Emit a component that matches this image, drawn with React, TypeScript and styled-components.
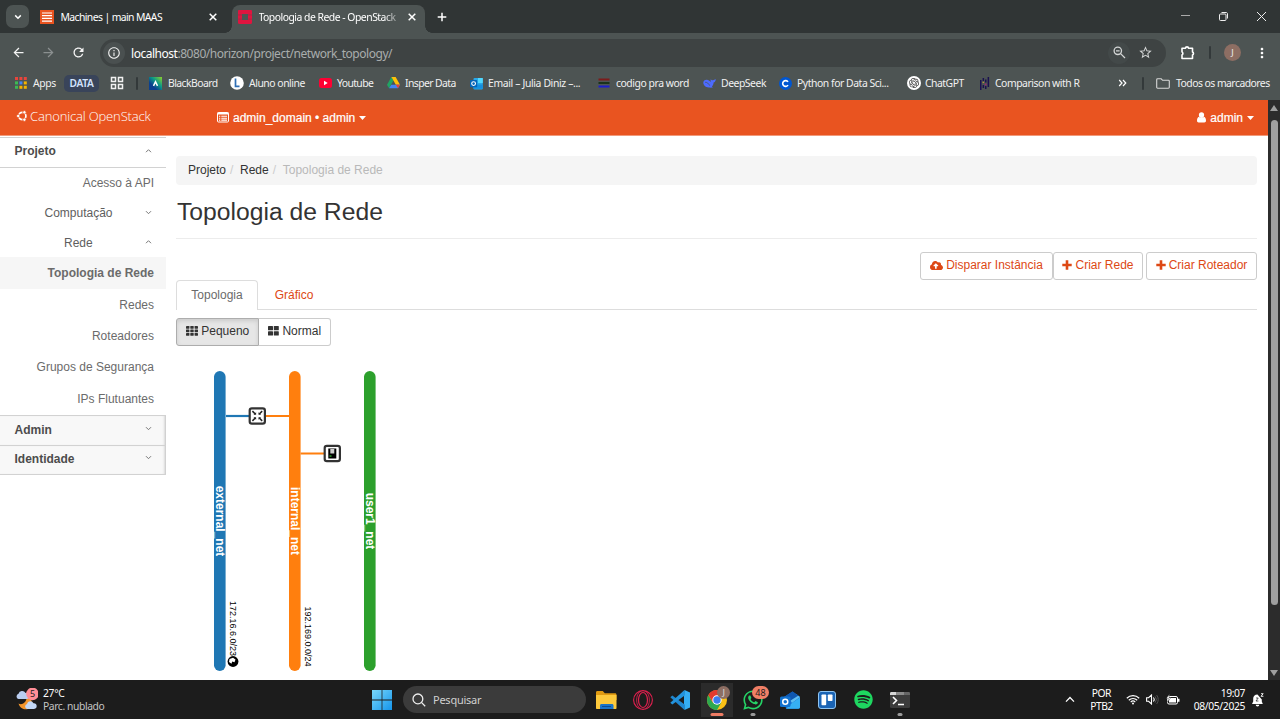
import React from "react";
import styled, { createGlobalStyle, css } from "styled-components";
import { FaCloudUploadAlt, FaWhatsapp, FaSpotify } from "react-icons/fa";
import { MdOutlineInfo, MdArrowBack, MdArrowForward, MdRefresh, MdStarBorder, MdMoreVert } from "react-icons/md";
import { SiOpenai } from "react-icons/si";

const uiFont = `"Noto Sans", "Open Sans", sans-serif`;
const pageFont = `"Liberation Sans", Arial, sans-serif`;

const GlobalStyle = createGlobalStyle`
  * { box-sizing: border-box; }
  body { margin: 0; overflow: hidden; }
  svg { display: block; flex: none; }
`;

const Screen = styled.div`
  width: 1280px;
  height: 719px;
  display: flex;
  flex-direction: column;
  overflow: hidden;
  background: #fff;
  font-family: ${uiFont};
`;

const Label = styled.span<{ $ls?: number }>`
  white-space: nowrap;
  letter-spacing: ${(p) => p.$ls ?? 0}px;
`;

/* ---------- browser window ---------- */

const TabStrip = styled.div`
  height: 33px;
  flex: none;
  display: flex;
  background: #303535;
  color: #fff;
  font-size: 10.4px;
`;

const TabSearch = styled.div`
  width: 23px;
  height: 23px;
  margin: 5px 0 0 6px;
  border-radius: 7px;
  background: #4d5453;
  display: grid;
  place-items: center;
`;

const Tab = styled.div<{ $active?: boolean; $width: number; $inset: number }>`
  position: relative;
  width: ${(p) => p.$width}px;
  height: 28px;
  margin-top: 5px;
  padding: 0 ${(p) => (p.$active ? 9 : 15)}px 5px ${(p) => p.$inset}px;
  display: flex;
  align-items: center;
  border-radius: 8px 8px 0 0;
  ${(p) =>
    p.$active &&
    css`
      background: #4d5453;
      &::before,
      &::after {
        content: "";
        position: absolute;
        bottom: 0;
        width: 7px;
        height: 7px;
      }
      &::before {
        left: -7px;
        background: radial-gradient(circle at 0 0, transparent 6.5px, #4d5453 7px);
      }
      &::after {
        right: -7px;
        background: radial-gradient(circle at 100% 0, transparent 6.5px, #4d5453 7px);
      }
    `}
`;

const TabTitle = styled(Label)<{ $fade?: boolean }>`
  flex: 1;
  min-width: 0;
  margin-left: 6.5px;
  ${(p) => p.$fade && css`mask-image: linear-gradient(90deg, #000 84%, transparent 97%);`}
`;

const NewTab = styled.div`
  width: 14px;
  margin: 10px 0 0 10px;
`;

const WindowControls = styled.div`
  margin-left: auto;
  padding: 11px 13px 0 0;
  display: flex;
  gap: 27px;
`;

const Toolbar = styled.div`
  height: 34px;
  flex: none;
  display: flex;
  align-items: center;
  padding: 5px 10px 0 11px;
  background: #4d5453;
  color: #fff;
`;

const NavButton = styled.div<{ $dim?: boolean }>`
  width: 30px;
  color: ${(p) => (p.$dim ? "#8b9090" : "#f4f4f4")};
`;

const Omnibox = styled.div`
  width: 1066px;
  height: 28px;
  margin-left: -1px;
  padding: 0 12px 0 3px;
  display: flex;
  align-items: center;
  border-radius: 14px;
  background: #3e4343;
  font-size: 12px;
  color: #a9adad;
`;

const RoundSpot = styled.div<{ $faint?: boolean }>`
  width: 22px;
  height: 22px;
  border-radius: 50%;
  display: grid;
  place-items: center;
  background: ${(p) => (p.$faint ? "#434949" : "#4a5050")};
  color: #eee;
`;

const Url = styled(Label)`
  margin-left: 6px;
  padding-top: 1px;
  flex: 1;
  b {
    font-weight: 400;
    color: #fff;
  }
`;

const OmniActions = styled.div`
  display: flex;
  align-items: center;
  gap: 8px;
  padding-right: 1px;
  color: #d4d6d6;
`;

const ToolbarRight = styled.div`
  flex: 1;
  display: flex;
  align-items: center;
  justify-content: flex-end;
`;

const Avatar = styled.div`
  width: 17px;
  height: 17px;
  margin: 0 13px 0 13px;
  border-radius: 50%;
  background: #8d6e63;
  color: #eee;
  font-size: 9px;
  display: grid;
  place-items: center;
`;

const Divider = styled.div`
  width: 2px;
  height: 13px;
  border-radius: 1px;
  background: #33393a;
`;

const ToolbarDivider = styled(Divider)`
  margin-left: 13px;
`;

const BookmarkBar = styled.div`
  height: 33px;
  flex: none;
  display: flex;
  align-items: center;
  padding: 0 0 1px 15px;
  background: #4d5453;
  color: #f1f1f1;
  font-size: 10.4px;
`;

const Bookmark = styled.div<{ $width: number; $gap?: number }>`
  flex: 0 0 ${(p) => p.$width}px;
  display: flex;
  align-items: center;
  gap: ${(p) => p.$gap ?? 5}px;
`;

const GroupPill = styled.div`
  width: 35px;
  height: 17px;
  border-radius: 5px;
  background: #39445a;
  color: #d3e3fd;
  font-weight: 600;
  font-size: 10.2px;
  display: grid;
  place-items: center;
`;

/* ---------- page ---------- */

const Viewport = styled.div`
  height: 580px;
  flex: none;
  display: flex;
  font-family: ${pageFont};
  font-size: 12px;
`;

const Page = styled.div`
  width: 1268px;
  display: flex;
  flex-direction: column;
`;

const Navbar = styled.header`
  height: 36px;
  flex: none;
  display: flex;
  align-items: center;
  padding: 0 14px 0 16px;
  background: #e95420;
  border-bottom: 1px solid #f19a7b;
  color: #fff;
  -webkit-text-stroke: 0.2px #fff;
`;

const Brand = styled.div`
  width: 201px;
  display: flex;
  align-items: center;
  gap: 2px;
  padding-bottom: 3px;
  font-family: "Open Sans", "Noto Sans", sans-serif;
  font-size: 13px;
  font-weight: 300;
  -webkit-text-stroke: 0;
`;

const NavMenu = styled.div<{ $right?: boolean }>`
  display: flex;
  align-items: center;
  gap: 4px;
  margin-left: ${(p) => (p.$right ? "auto" : "0")};
`;

const Body = styled.div`
  flex: 1;
  display: flex;
`;

const Sidebar = styled.nav`
  width: 166px;
  padding-top: 1px;
  color: #6b6b6b;
`;

const PanelHead = styled.div<{ $closed?: boolean }>`
  height: ${(p) => (p.$closed ? 30 : 31)}px;
  padding: 0 14px 3px 14.5px;
  display: flex;
  align-items: center;
  justify-content: space-between;
  font-weight: 700;
  color: #4c4c4c;
  border-top: 1px solid #d2d2d2;
  ${(p) =>
    p.$closed
      ? css`
          padding-bottom: 1px;
          background: #f8f8f8;
          box-shadow: inset -3px 0 3px -2px #bbb;
          &:last-child {
            padding-bottom: 2px;
            border-bottom: 1px solid #d2d2d2;
          }
        `
      : css`
          border-bottom: 1px solid #d2d2d2;
        `}
`;

const GroupHead = styled.div<{ $height: number; $indent: number }>`
  height: ${(p) => p.$height}px;
  padding: 0 14px 1px ${(p) => p.$indent}px;
  display: flex;
  align-items: center;
  justify-content: space-between;
  color: #5e5e5e;
`;

const SideLink = styled.div<{ $active?: boolean; $height?: number }>`
  height: ${(p) => p.$height ?? 31.4}px;
  padding-right: 12px;
  display: flex;
  align-items: center;
  justify-content: flex-end;
  font-weight: ${(p) => (p.$active ? 700 : 400)};
  background: ${(p) => (p.$active ? "#f6f6f6" : "transparent")};
`;

const Main = styled.main`
  width: 1081px;
  margin-left: 10px;
  padding-top: 20px;
`;

const Breadcrumb = styled.div`
  height: 29px;
  padding: 0 12px 2px;
  display: flex;
  align-items: center;
  border-radius: 4px;
  background: #f5f5f5;
  color: #333;
  i {
    width: 14px;
    padding-left: 4px;
    font-style: normal;
    color: #ccc;
  }
  em {
    font-style: normal;
    color: #b9b9b9;
  }
`;

const Title = styled.h1`
  height: 54px;
  margin: 0;
  padding-left: 1px;
  border-bottom: 1px solid #ececec;
  font-size: 24.7px;
  line-height: 53px;
  font-weight: 400;
  color: #333;
`;

const Actions = styled.div`
  height: 41px;
  padding-top: 13px;
  display: flex;
  justify-content: flex-end;
`;

const Button = styled.button<{ $width: number; $gapLeft?: number }>`
  width: ${(p) => p.$width}px;
  height: 28px;
  margin: 0 0 0 ${(p) => p.$gapLeft ?? 0}px;
  padding: 0 0 2px;
  display: flex;
  align-items: center;
  justify-content: center;
  gap: 3px;
  border: 1px solid #ccc;
  border-radius: 3px;
  background: #fff;
  font: 12px ${pageFont};
  color: #dd4814;
  white-space: nowrap;
`;

const Tabs = styled.div`
  height: 30px;
  display: flex;
  border-bottom: 1px solid #ddd;
`;

const PageTab = styled.div<{ $active?: boolean }>`
  width: ${(p) => (p.$active ? 82 : 72)}px;
  height: 30px;
  padding-bottom: 1px;
  display: grid;
  place-items: center;
  color: ${(p) => (p.$active ? "#6b6b6b" : "#dd4814")};
  ${(p) =>
    p.$active &&
    css`
      border: 1px solid #ddd;
      border-bottom: 0;
      border-radius: 4px 4px 0 0;
      background: #fff;
    `}
`;

const Toggle = styled.div`
  margin-top: 8px;
  display: flex;
`;

const ToggleButton = styled(Button)<{ $on?: boolean }>`
  padding-bottom: 3px;
  gap: 3.5px;
  color: #333;
  ${(p) =>
    p.$on
      ? css`
          background: #e6e6e6;
          border-color: #adadad;
          border-radius: 3px 0 0 3px;
          box-shadow: inset 0 2px 4px rgba(0, 0, 0, 0.12);
        `
      : css`
          border-left: 0;
          border-radius: 0 3px 3px 0;
        `}
`;

const Canvas = styled.div`
  margin-top: 24px;
`;

const Scrollbar = styled.div`
  width: 12px;
  padding: 5px 2px 4px;
  display: flex;
  flex-direction: column;
  align-items: center;
  justify-content: space-between;
  background: #2c2c2c;
`;

const Thumb = styled.div`
  width: 7px;
  height: 485px;
  margin-bottom: auto;
  margin-top: 9px;
  border-radius: 4px;
  background: #9f9f9f;
`;

/* ---------- taskbar ---------- */

const Taskbar = styled.footer`
  height: 39px;
  flex: none;
  display: flex;
  align-items: center;
  background: #1c1c1c;
  color: #fff;
  font-size: 10.3px;
`;

const Weather = styled.div`
  width: 372px;
  padding-left: 16px;
  display: flex;
  align-items: center;
  gap: 5px;
`;

const Lines = styled.div<{ $right?: boolean; $center?: boolean }>`
  display: flex;
  flex-direction: column;
  align-items: ${(p) => (p.$right ? "flex-end" : p.$center ? "center" : "flex-start")};
  line-height: 13px;
  small {
    font-size: inherit;
    color: #c4c4c4;
  }
`;

const SearchBox = styled.div`
  width: 183px;
  height: 27px;
  margin: 0 2px 0 11px;
  padding-left: 9px;
  display: flex;
  align-items: center;
  gap: 7px;
  border-radius: 14px;
  background: #3b3b3b;
  color: #d0d0d0;
  font-size: 11px;
`;

const TaskButton = styled.div<{ $state?: "active" | "open" }>`
  position: relative;
  width: 36.75px;
  height: 39px;
  display: grid;
  place-items: center;
  ${(p) =>
    p.$state === "active" &&
    css`
      background: linear-gradient(#2b2b2b, #2b2b2b) center / 32px 34px no-repeat;
    `}
  ${(p) =>
    p.$state &&
    css`
      &::after {
        content: "";
        position: absolute;
        bottom: 3px;
        left: 50%;
        transform: translateX(-50%);
        width: ${p.$state === "active" ? 13 : 5}px;
        height: 3px;
        border-radius: 2px;
        background: ${p.$state === "active" ? "#ee7c64" : "#9a9a9a"};
      }
    `}
`;

const Badge = styled.span<{ $kind: "user" | "count" }>`
  position: absolute;
  top: 6px;
  left: ${(p) => (p.$kind === "user" ? 19 : 17)}px;
  width: ${(p) => (p.$kind === "user" ? 13 : 17)}px;
  height: 13px;
  border-radius: 7px;
  background: ${(p) => (p.$kind === "user" ? "#8d6e63" : "#f07f66")};
  color: ${(p) => (p.$kind === "user" ? "#ddd" : "#1c1c1c")};
  font-size: 9px;
  line-height: 13px;
  text-align: center;
`;

const Tray = styled.div`
  margin-left: auto;
  padding-right: 16px;
  display: flex;
  align-items: center;
`;

const TrayIcons = styled.div`
  width: 54px;
  margin: 0 14px 0 13px;
  display: flex;
  align-items: center;
  justify-content: space-between;
`;

const TrayArrow = styled.svg`
  margin-right: 15px;
  fill: none;
  stroke: #fff;
  stroke-width: 1.3;
`;

const Bell = styled.div`
  margin-left: 7px;
`;

/* ---------- drawings ---------- */

const Close = () => (
  <svg width="8" height="8" viewBox="0 0 8 8" stroke="#fff" strokeWidth="1.5"><path d="M.7.7l6.6 6.6M7.3.7L.7 7.3" /></svg>
);

const Chevron = ({ up }: { up?: boolean }) => (
  <svg width="7" height="7" viewBox="0 0 7 7" fill="none" stroke="#777" strokeWidth="1">
    <path d={up ? "M1 4.200L3.500 1.700 6 4.200" : "M1 1.200L3.500 3.700 6 1.200"} />
  </svg>
);

const Caret = () => (
  <svg width="7" height="4" viewBox="0 0 7 4" fill="#fff"><path d="M0 0h7L3.500 4z" /></svg>
);

const Plus = () => (
  <svg width="10" height="10" viewBox="0 0 10 10" fill="#dd4814"><path d="M3.700.3h2.600v3.400h3.400v2.600H6.300v3.400H3.700V6.300H.3V3.700h3.400z" /></svg>
);

const ListIcon = () => (
  <svg width="12" height="11" viewBox="0 0 12 11">
    <rect x=".5" y=".5" width="11" height="9.500" rx="1" fill="none" stroke="#fff" />
    <path d="M.5.500h11v2H.5z" fill="#fff" />
    <path d="M2 4.300h1.300M2 6.200h1.300M2 8.100h1.300M4.300 4.300H10M4.300 6.200H10M4.300 8.100H10" stroke="#fff" strokeWidth="1.100" />
  </svg>
);

const SmallTiles = () => (
  <svg width="12" height="10" viewBox="0 0 12 10" fill="#333">
    {[0, 3.5, 7].map((y) => [0, 4.3, 8.6].map((x) => <rect key={`${x}-${y}`} x={x} y={y} width="3.400" height="2.700" rx=".4" />))}
  </svg>
);

const LargeTiles = () => (
  <svg width="11" height="10" viewBox="0 0 11 10" fill="#333">
    {[0, 5.2].map((y) => [0, 5.8].map((x) => <rect key={`${x}-${y}`} x={x} y={y} width="5" height="4.300" rx=".6" />))}
  </svg>
);

const MaasIcon = () => (
  <svg width="14" height="14" viewBox="0 0 14 14"><rect width="14" height="14" fill="#e95420" /><path d="M2 3h10M2 5.700h10M2 8.400h10M2 11.100h10" stroke="#fff" strokeWidth="1.200" /></svg>
);

const OpenStackIcon = () => (
  <svg width="14" height="14" viewBox="0 0 14 14" fill="#e0143f">
    <path fillRule="evenodd" d="M1.200 0h11.600c.7 0 1.200.5 1.200 1.200v11.600c0 .7-.5 1.200-1.200 1.200H1.200C.5 14 0 13.500 0 12.800V1.200C0 .5.500 0 1.200 0zM4 4v6h6V4z" />
    <path d="M0 4.900h4M0 9.100h4M10 4.900h4M10 9.100h4" stroke="#8a3548" strokeWidth=".7" />
  </svg>
);

const dots = ["#e8453c", "#e8453c", "#e8453c", "#3cba54", "#4285f4", "#f4b400", "#3cba54", "#f4b400", "#f4b400"];
const AppsIcon = () => (
  <svg width="12" height="12" viewBox="0 0 12 12">
    {dots.map((c, i) => <rect key={i} x={(i % 3) * 4.4} y={Math.floor(i / 3) * 4.4} width="3" height="3" fill={c} />)}
  </svg>
);

const GridIcon = () => (
  <svg width="14" height="14" viewBox="0 0 14 14" fill="none" stroke="#f1f1f1" strokeWidth="1.500">
    <path d="M1.500 1.500h4v4h-4zM8.500 1.500h4v4h-4zM1.500 8.500h4v4h-4zM8.500 8.500h4v4h-4z" />
  </svg>
);

const PuzzleIcon = () => (
  <svg width="16" height="16" viewBox="0 0 16 16" fill="none" stroke="#fff" strokeWidth="1.600" strokeLinejoin="round">
    <path d="M2 3.300h3.500a1.500 1.400 0 013 0h4v3.700a1.500 1.600 0 010 3v3.500H2V10a1.900 1.900 0 000-3.200z" />
  </svg>
);

const BlackboardIcon = () => (
  <svg width="13" height="13" viewBox="0 0 13 13">
    <defs><linearGradient id="bb" x1="0" y1="1" x2="1" y2="0"><stop offset=".3" stopColor="#0a3f8f" /><stop offset=".6" stopColor="#0b9a86" /><stop offset="1" stopColor="#8fd32a" /></linearGradient></defs>
    <rect width="13" height="13" fill="url(#bb)" /><path d="M4.500 8.800L6.500 4.700l2 4.100" fill="none" stroke="#fff" strokeWidth="1.500" />
  </svg>
);

const AlunoIcon = () => (
  <svg width="14" height="14" viewBox="0 0 14 14"><circle cx="7" cy="7" r="6.800" fill="#fff" /><path d="M5.500 2.600v7.800h4" fill="none" stroke="#2f6fb5" strokeWidth="1.700" /></svg>
);

const YoutubeIcon = () => (
  <svg width="13" height="10" viewBox="0 0 13 10"><rect width="13" height="10" rx="2.500" fill="#f03" /><path d="M5 2.800v4.400L8.700 5z" fill="#fff" /></svg>
);

const DriveIcon = () => (
  <svg width="13" height="12" viewBox="0 0 13 12"><path d="M4.400 0L0 7.700l2 3.600L6.500 3.600z" fill="#1fa463" /><path d="M4.400 0h4.200L13 7.700H8.800z" fill="#ffc107" /><path d="M4.300 7.700H13l-2 3.600H2z" fill="#4285f4" /><path d="M8.800 7.700H13l-2 3.600z" fill="#ea4335" /></svg>
);

const OutlookIcon = () => (
  <svg width="13" height="13" viewBox="0 0 13 13"><rect x="3.500" y="1" width="9.300" height="11.500" rx="1" fill="#28a8ea" /><path d="M8 1h4.800v5H8z" fill="#50d9ff" /><path d="M3.500 7.500h9.300v4.300H3.500z" fill="#1490df" /><rect y="3" width="7.200" height="7.200" rx=".8" fill="#0364b8" /><circle cx="3.600" cy="6.600" r="1.900" fill="none" stroke="#fff" strokeWidth="1.100" /></svg>
);

const CodeIcon = () => (
  <svg width="12" height="12" viewBox="0 0 12 12"><path d="M.5 1.500h11v2H.5z" fill="#7d1b1b" /><path d="M.5 5h11v2H.5z" fill="#1b331b" /><path d="M.5 8.500h11v2H.5z" fill="#1c1ccc" /></svg>
);

const WhaleIcon = () => (
  <svg width="13" height="11" viewBox="0 0 13 11" fill="#4d6bfe">
    <path d="M.3 4.200C1 1.800 3.200 1.400 4.800 2c.9.200 2 1 2.800 2 .3-.9-.3-1.800.2-2.700.5.8 1.200 1.100 2.100.9C10.900 2 12 1.500 12.700.9 12.800 3 11.700 4.200 10.600 4.600c0 1.800-.8 3.100-1.700 4 .4.300.8.500 1.200.7-1.600.6-3.200.3-4.300.2C2.300 9.300.1 6.700.3 4.200z" />
    <path d="M2.200 4.300c1.800-.2 3.500 1.300 4.500 3.300" stroke="#4d5453" strokeWidth=".8" fill="none" />
  </svg>
);

const CourseraIcon = () => (
  <svg width="13" height="13" viewBox="0 0 13 13"><circle cx="6.500" cy="6.500" r="6.500" fill="#0056d2" /><path d="M9 4.900a2.900 2.900 0 100 3.200" fill="none" stroke="#fff" strokeWidth="1.600" /></svg>
);

const ChatBadge = styled.div`
  width: 14px;
  height: 14px;
  border-radius: 50%;
  background: #fff;
  color: #333;
  font-size: 10px;
  display: grid;
  place-items: center;
`;

const PandasIcon = () => (
  <svg width="11" height="13" viewBox="0 0 11 13" fill="#1a1150"><path d="M1 3h1.500v10H1zM3.600 1h1.500v3H3.600zM3.600 8h1.500v3H3.600zM6 2.500h1.500v3H6zM6 9h1.500v3H6zM8.600 0h1.500v10H8.600z" /><path d="M3.600 4.800h1.500v1.200H3.600z" fill="#b9903a" /><path d="M5.800 6.600h1.700v1.600H5.800z" fill="#9a2179" /></svg>
);

const FolderIcon = () => (
  <svg width="14" height="11" viewBox="0 0 14 11" fill="none" stroke="#d7d7d7" strokeWidth="1.100"><path d="M1.600.8h3.600l1.400 1.500h5.800c.5 0 .9.300.9.800v6.200c0 .500-.4.900-.9.900H1.600c-.5 0-.9-.4-.9-.9V1.700c0-.5.400-.9.900-.9z" /></svg>
);

const CircleOfFriends = () => (
  <svg width="12" height="12" viewBox="0 0 12 12">
    <circle cx="6.300" cy="6" r="3.600" fill="none" stroke="#fff" strokeWidth="1.700" />
    <g fill="#fff" stroke="#e95420" strokeWidth=".8">
      <circle cx="2.200" cy="6" r="1.700" />
      <circle cx="8.400" cy="2.300" r="1.700" />
      <circle cx="8.400" cy="9.700" r="1.700" />
    </g>
  </svg>
);

const UserIcon = () => (
  <svg width="9" height="11" viewBox="0 0 10 12" fill="#fff"><ellipse cx="5" cy="3.300" rx="2.900" ry="3.200" /><path d="M2.300 5.300C.6 5.800 0 7.500 0 9.700 0 10.900.8 11.600 1.800 11.600h6.400c1 0 1.800-.7 1.800-1.900 0-2.200-.6-3.900-2.300-4.400C7 6.600 3 6.600 2.300 5.300z" /></svg>
);

const WeatherIcon = () => (
  <svg width="22" height="24" viewBox="0 0 22 24">
    <path d="M2.500 15.500c2.500 1.500 7 1 8.500-6.500 4 1 6.500 5 4 9.500-2.500 4-10 4.500-12.500-3z" fill="#f2952c" />
    <path d="M2.500 11a2.700 2.700 0 010-5.200A3.800 3.800 0 019.500 5 3 3 0 0111 11z" fill="#b9cdf0" />
    <path d="M11 21a2.600 2.600 0 010-5 3.500 3.500 0 016.500-.8A2.900 2.900 0 0118 21z" fill="#c3d8f7" />
    <circle cx="16.500" cy="5.900" r="6.300" fill="#ff8e97" />
    <text x="16.500" y="9.200" textAnchor="middle" fontSize="9" fill="#222">5</text>
  </svg>
);

const WindowsIcon = () => (
  <svg width="20" height="20" viewBox="0 0 20 20">
    <defs><linearGradient id="win" x1="0" y1="0" x2="1" y2="1"><stop stopColor="#7ad8fb" /><stop offset="1" stopColor="#1494ea" /></linearGradient></defs>
    <path d="M0 0h9.600v9.600H0zM10.400 0H20v9.600h-9.600zM0 10.400h9.600V20H0zM10.400 10.400H20V20h-9.600z" fill="url(#win)" />
  </svg>
);

const SearchIcon = () => (
  <svg width="14" height="14" viewBox="0 0 14 14" fill="none" stroke="#eee" strokeWidth="1.300"><circle cx="5.900" cy="5.900" r="4.900" /><path d="M9.400 9.400l3.800 3.800" /></svg>
);

const ExplorerIcon = () => (
  <svg width="21" height="18" viewBox="0 0 21 18"><path d="M0 1.500C0 .7.500 0 1.400 0h5.400l2 2.300H19c1 0 1.500.6 1.500 1.500V9H0z" fill="#e09a12" /><path d="M0 4h20.500v13c0 .6-.3 1-1 1H1c-.7 0-1-.4-1-1z" fill="#fdc93c" /><path d="M4 18v-3.500c0-.9.600-1.500 1.500-1.500H16c.9 0 1.500.6 1.500 1.500V18z" fill="#1b74c9" /><path d="M6 15.500h9" stroke="#0d4c93" /></svg>
);

const OperaIcon = () => (
  <svg width="20" height="20" viewBox="0 0 20 20" fill="none" stroke="#e0204f"><circle cx="10" cy="10" r="9.400" strokeWidth="1.100" /><ellipse cx="10" cy="10" rx="4.500" ry="7.500" strokeWidth="1.200" /><path d="M7.800 1c-5.600 3-5.600 15 0 18M12.200 1c5.600 3 5.600 15 0 18" strokeWidth=".8" /></svg>
);

const CodeEditorIcon = () => (
  <svg width="20" height="20" viewBox="0 0 20 20">
    <path d="M14.500 0L20 2.400v15.200L14.500 20 14 15V5z" fill="#35adf2" />
    <path d="M14.500 20L.3 7.200l2-1.800L15 14.800z" fill="#1e86cf" />
    <path d="M14.500 0L.3 12.800l2 1.800L15 5.200z" fill="#2393dc" />
  </svg>
);

const ChromeIcon = () => (
  <svg width="20" height="20" viewBox="0 0 20 20">
    <circle cx="10" cy="10" r="10" fill="#fbc116" />
    <path d="M1.340 5A10 10 0 0010 20l4.300-7.500L10 10 5.700 12.500z" fill="#2da94f" />
    <path d="M10 5.500h8.930A10 10 0 0010 0 10 10 0 001.340 5l4.500 7.500z" fill="#e33b2e" />
    <circle cx="10" cy="10" r="4.700" fill="#fff" /><circle cx="10" cy="10" r="3.700" fill="#3b7df0" />
  </svg>
);

const OutlookNewIcon = () => (
  <svg width="20" height="18" viewBox="0 0 20 18"><path d="M4 6l8.500-5.500L20 6v10c0 1-.6 1.700-1.700 1.700H6z" fill="#1a6fd0" /><path d="M9 7.500L16 3l4 3-8 6z" fill="#5fbdf0" /><path d="M20 6.500V16c0 1-.6 1.700-1.700 1.700H6l6-5.700z" fill="#36b0f3" /><path d="M4 6l8.500-5.500 6 4L9 10.500z" fill="#0f57b0" /><rect y="5.500" width="10.500" height="10.500" rx="1.600" fill="#1272cf" /><circle cx="5.250" cy="10.750" r="2.500" fill="none" stroke="#fff" strokeWidth="1.500" /></svg>
);

const TrelloIcon = () => (
  <svg width="18" height="18" viewBox="0 0 18 18"><rect x=".5" y=".5" width="17" height="17" rx="2.500" fill="#1a64b5" stroke="#8fc5f2" /><rect x="3.500" y="3.500" width="4.700" height="10.800" rx=".8" fill="#fff" /><rect x="9.800" y="3.500" width="4.700" height="6.500" rx=".8" fill="#fff" /></svg>
);

const TerminalIcon = () => (
  <svg width="20" height="16" viewBox="0 0 20 16"><rect width="20" height="16" rx="1.500" fill="#3c3c3c" /><path d="M1.500 0h5v3H0V1.500C0 .5.600 0 1.500 0z" fill="#d6d6d6" /><path d="M7 0h7v3H7z" fill="#8c8c8c" /><path d="M14 0h4.500c1 0 1.500.5 1.500 1.500V3h-6z" fill="#666" /><path d="M3 5l3.500 3.500L3 12M8 12.500h6" fill="none" stroke="#fff" strokeWidth="1.600" /></svg>
);

const WifiIcon = () => (
  <svg width="14" height="11" viewBox="0 0 14 11" fill="none" stroke="#fff" strokeWidth="1.200"><path d="M.8 4.200a8.800 8.800 0 0112.400 0M2.800 6.200a6 6 0 018.400 0M4.700 8.100a3.300 3.300 0 014.600 0" /><circle cx="7" cy="9.600" r="1" fill="#fff" stroke="none" /></svg>
);

const VolumeIcon = () => (
  <svg width="13" height="11" viewBox="0 0 13 11" fill="none" stroke="#fff" strokeWidth="1.100"><path d="M.6 3.700h2L5.500 1v9L2.600 7.300h-2zM7.300 3.500a3 3 0 010 4" /><path d="M9 2.300a4.800 4.800 0 010 6.400M10.600 1a7 7 0 010 9" stroke="#555" strokeWidth=".9" /></svg>
);

const BatteryIcon = () => (
  <svg width="14" height="12" viewBox="0 0 14 12"><rect x="1.500" y="2.500" width="10" height="7.500" rx="1.500" fill="none" stroke="#fff" /><path d="M3 4h7v4.500H3zM12 4.800h1.500v3H12z" fill="#fff" /><path d="M3.500 0L.3 4.500h2L1.500 8 5 3.500H3z" fill="#fff" stroke="#1c1c1c" strokeWidth=".4" /></svg>
);

const BellIcon = () => (
  <svg width="12" height="14" viewBox="0 0 12 14" fill="#fff"><path d="M5.500 1.500C2.700 1.500 1.200 3.300 1.200 5.500v3L0 11h10.800L9.800 8.500V6.500z" /><path d="M3.700 11.700h3.600a1.800 1.800 0 01-3.600 0z" /><path d="M9 .7h2.200L9 3.300h2.400" stroke="#fff" strokeWidth=".9" fill="none" /><path d="M4 5h2.200L4 8h2.400" stroke="#1c1c1c" fill="none" strokeWidth=".7" /></svg>
);

const networks = [
  { name: "external_net", color: "#1f77b4", x: 38, cidr: "172.16.6.0/23", end: 286 },
  { name: "internal_net", color: "#ff7f0e", x: 113, cidr: "192.169.0.0/24", end: 296.5 },
  { name: "user1_net", color: "#2ca02c", x: 188 },
];

const Topology = () => (
  <svg width="400" height="310" viewBox="0 0 400 310" fontFamily="Liberation Sans, Arial, sans-serif">
    {networks.map((n) => (
      <g key={n.name}>
        <rect x={n.x} y="1" width="11.600" height="300" rx="5.800" fill={n.color} />
        <text transform={`translate(${n.x + 1.7} 151) rotate(90)`} textAnchor="middle" fontSize="12" fontWeight="700" fill="#fff">{n.name}</text>
        {n.cidr && <text transform={`translate(${n.x + 15.5} ${n.end}) rotate(90)`} textAnchor="end" fontSize="9" fill="#000">{n.cidr}</text>}
      </g>
    ))}
    <g transform="translate(57 291.500)">
      <circle r="5.400" fill="#000" /><path d="M-3.500-2.500L0-3.800 2.500-2 1.500.8-.8 0-1.500 2.300-4 .5z" fill="#fff" />
    </g>
    <path d="M50 46h24" stroke="#1f77b4" strokeWidth="2.200" />
    <path d="M88 46h25M124.600 83.500h25" stroke="#ff7f0e" strokeWidth="2.200" />
    <g transform="translate(81.300 46)">
      <rect x="-7.600" y="-7.600" width="15.200" height="15.200" rx="2.200" fill="#fff" stroke="#333" strokeWidth="2.200" />
      {[0, 90, 180, 270].map((a) => (
        <g key={a} transform={`rotate(${a})`} stroke="#222" strokeWidth="1.500" fill="#222"><path d="M-4.900-4.900L-2-2" /><path d="M-1.200-3.800v2.600h-2.600z" stroke="none" /></g>
      ))}
    </g>
    <g transform="translate(156.300 83.500)">
      <rect x="-7.600" y="-7.600" width="15.200" height="15.200" rx="2.200" fill="#fff" stroke="#333" strokeWidth="2.200" />
      <rect x="-4" y="-5" width="8" height="10" fill="#000" /><path d="M-2-4.500h4V0h-4z" fill="#ccc" /><rect x="-2.800" y="1.800" width="2" height="1.500" fill="#2ca02c" />
    </g>
  </svg>
);

/* ---------- composition ---------- */

const bookmarks: { icon: React.ReactNode; text: string; width: number; gap?: number; ls: number }[] = [
  { icon: <BlackboardIcon />, text: "BlackBoard", width: 81, gap: 6, ls: -0.55 },
  { icon: <AlunoIcon />, text: "Aluno online", width: 89, ls: -0.47 },
  { icon: <YoutubeIcon />, text: "Youtube", width: 68, ls: -0.62 },
  { icon: <DriveIcon />, text: "Insper Data", width: 83, ls: -0.58 },
  { icon: <OutlookIcon />, text: "Email – Julia Diniz –...", width: 128, ls: -0.36 },
  { icon: <CodeIcon />, text: "codigo pra word", width: 105, gap: 6, ls: -0.45 },
  { icon: <WhaleIcon />, text: "DeepSeek", width: 76, ls: -0.46 },
  { icon: <CourseraIcon />, text: "Python for Data Sci...", width: 128, ls: -0.45 },
  { icon: <ChatBadge><SiOpenai /></ChatBadge>, text: "ChatGPT", width: 72, gap: 4, ls: -0.5 },
  { icon: <PandasIcon />, text: "Comparison with R", width: 139, ls: -0.46 },
];

const Browser = () => (
  <>
    <TabStrip>
      <TabSearch><svg width="8" height="6" viewBox="0 0 8 6" fill="none" stroke="#fff" strokeWidth="1.500"><path d="M1.200 1.400L4 4.200l2.800-2.800" /></svg></TabSearch>
      <Tab $width={203} $inset={11}><MaasIcon /><TabTitle $ls={-0.6}>Machines | main MAAS</TabTitle><Close /></Tab>
      <Tab $width={193} $inset={6} $active><OpenStackIcon /><TabTitle $ls={-0.5} $fade>Topologia de Rede - OpenStack</TabTitle><Close /></Tab>
      <NewTab><svg width="14" height="14" viewBox="0 0 14 14" stroke="#fff" strokeWidth="1.500"><path d="M7 2.700v8.600M2.700 7h8.600" /></svg></NewTab>
      <WindowControls>
        <svg width="11" height="11" viewBox="0 0 11 11" stroke="#aaa"><path d="M1 4.500h9" /></svg>
        <svg width="11" height="11" viewBox="0 0 11 11" fill="none" stroke="#eee"><rect x="1.500" y="3" width="6.500" height="6.500" rx="1" /><path d="M3.500 1.500H8c1 0 1.500.5 1.500 1.500v4.500" /></svg>
        <svg width="11" height="11" viewBox="0 0 11 11" stroke="#eee"><path d="M1 1l9 9M10 1l-9 9" /></svg>
      </WindowControls>
    </TabStrip>
    <Toolbar>
      <NavButton><MdArrowBack size={15} /></NavButton>
      <NavButton $dim><MdArrowForward size={15} /></NavButton>
      <NavButton><MdRefresh size={15} /></NavButton>
      <Omnibox>
        <RoundSpot><MdOutlineInfo size={14} /></RoundSpot>
        <Url $ls={-0.47}><b>localhost</b>:8080/horizon/project/network_topology/</Url>
        <OmniActions>
          <RoundSpot $faint><svg width="13" height="13" viewBox="0 0 13 13" fill="none" stroke="#d4d6d6" strokeWidth="1.300"><circle cx="4.800" cy="4.800" r="3.700" /><path d="M7.600 7.600l4.400 4.400M3 4.800h3.600" /></svg></RoundSpot>
          <MdStarBorder size={15} />
        </OmniActions>
      </Omnibox>
      <ToolbarRight>
        <PuzzleIcon />
        <ToolbarDivider />
        <Avatar>J</Avatar>
        <MdMoreVert size={16} />
      </ToolbarRight>
    </Toolbar>
    <BookmarkBar>
      <Bookmark $width={49} $gap={6}><AppsIcon /><Label $ls={-0.35}>Apps</Label></Bookmark>
      <Bookmark $width={46}><GroupPill><Label $ls={-0.3}>DATA</Label></GroupPill></Bookmark>
      <Bookmark $width={26}><GridIcon /></Bookmark>
      <Bookmark $width={13}><Divider /></Bookmark>
      {bookmarks.map((b) => (
        <Bookmark key={b.text} $width={b.width} $gap={b.gap}>{b.icon}<Label $ls={b.ls}>{b.text}</Label></Bookmark>
      ))}
      <Bookmark $width={24}><svg width="9" height="8" viewBox="0 0 9 8" fill="none" stroke="#fff" strokeWidth="1.200"><path d="M1.200 1L4 4 1.200 7M5 1l2.800 3L5 7" /></svg></Bookmark>
      <Bookmark $width={14}><Divider /></Bookmark>
      <Bookmark $width={124} $gap={6}><FolderIcon /><Label $ls={-0.53}>Todos os marcadores</Label></Bookmark>
    </BookmarkBar>
  </>
);

const SideNav = () => (
  <Sidebar>
    <PanelHead>Projeto<Chevron up /></PanelHead>
    <SideLink $height={30}>Acesso à API</SideLink>
    <GroupHead $height={31} $indent={44.5}>Computação<Chevron /></GroupHead>
    <GroupHead $height={28} $indent={64}>Rede<Chevron up /></GroupHead>
    <SideLink $active $height={32}>Topologia de Rede</SideLink>
    <SideLink>Redes</SideLink>
    <SideLink>Roteadores</SideLink>
    <SideLink>Grupos de Segurança</SideLink>
    <SideLink>IPs Flutuantes</SideLink>
    <PanelHead $closed>Admin<Chevron /></PanelHead>
    <PanelHead $closed>Identidade<Chevron /></PanelHead>
  </Sidebar>
);

export default function App() {
  return (
    <Screen>
      <GlobalStyle />
      <Browser />
      <Viewport>
        <Page>
          <Navbar>
            <Brand><CircleOfFriends /><Label $ls={-0.15}>Canonical OpenStack</Label></Brand>
            <NavMenu><ListIcon />admin_domain • admin<Caret /></NavMenu>
            <NavMenu $right><UserIcon />admin<Caret /></NavMenu>
          </Navbar>
          <Body>
            <SideNav />
            <Main>
              <Breadcrumb>Projeto<i>/</i>Rede<i>/</i><em>Topologia de Rede</em></Breadcrumb>
              <Title>Topologia de Rede</Title>
              <Actions>
                <Button $width={133}><FaCloudUploadAlt size={13} />Disparar Instância</Button>
                <Button $width={90}><Plus />Criar Rede</Button>
                <Button $width={111} $gapLeft={3}><Plus />Criar Roteador</Button>
              </Actions>
              <Tabs><PageTab $active>Topologia</PageTab><PageTab>Gráfico</PageTab></Tabs>
              <Toggle>
                <ToggleButton $width={83} $on><SmallTiles />Pequeno</ToggleButton>
                <ToggleButton $width={72}><LargeTiles />Normal</ToggleButton>
              </Toggle>
              <Canvas><Topology /></Canvas>
            </Main>
          </Body>
        </Page>
        <Scrollbar>
          <svg width="8" height="6" viewBox="0 0 8 6" fill="#9f9f9f"><path d="M4 0l4 6H0z" /></svg>
          <Thumb />
          <svg width="8" height="6" viewBox="0 0 8 6" fill="#9f9f9f"><path d="M4 6l4-6H0z" /></svg>
        </Scrollbar>
      </Viewport>
      <Taskbar>
        <Weather>
          <WeatherIcon />
          <Lines><Label $ls={-0.3}>27°C</Label><small><Label $ls={-0.4}>Parc. nublado</Label></small></Lines>
        </Weather>
        <WindowsIcon />
        <SearchBox><SearchIcon /><Label $ls={-0.25}>Pesquisar</Label></SearchBox>
        <TaskButton><ExplorerIcon /></TaskButton>
        <TaskButton><OperaIcon /></TaskButton>
        <TaskButton><CodeEditorIcon /></TaskButton>
        <TaskButton $state="active"><ChromeIcon /><Badge $kind="user">J</Badge></TaskButton>
        <TaskButton $state="open"><FaWhatsapp size={22} color="#25d366" /><Badge $kind="count">48</Badge></TaskButton>
        <TaskButton><OutlookNewIcon /></TaskButton>
        <TaskButton><TrelloIcon /></TaskButton>
        <TaskButton><FaSpotify size={19} color="#1ed760" /></TaskButton>
        <TaskButton $state="open"><TerminalIcon /></TaskButton>
        <Tray>
          <TrayArrow width="10" height="7" viewBox="0 0 10 7"><path d="M1 5.600L5 1.500l4 4.100" /></TrayArrow>
          <Lines $center><Label $ls={-0.5}>POR</Label><Label $ls={-0.5}>PTB2</Label></Lines>
          <TrayIcons><WifiIcon /><VolumeIcon /><BatteryIcon /></TrayIcons>
          <Lines $right><Label $ls={-0.4}>19:07</Label><Label $ls={-0.35}>08/05/2025</Label></Lines>
          <Bell><BellIcon /></Bell>
        </Tray>
      </Taskbar>
    </Screen>
  );
}
